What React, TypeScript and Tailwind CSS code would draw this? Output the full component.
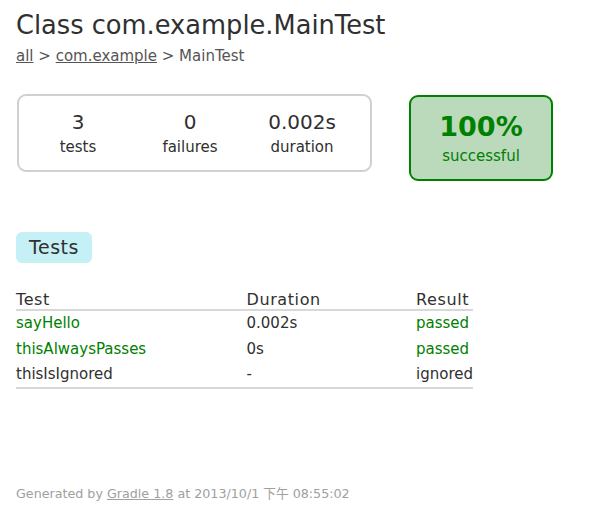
import React from 'react';

const tests = [
  { name: 'sayHello', duration: '0.002s', result: 'passed', ok: true },
  { name: 'thisAlwaysPasses', duration: '0s', result: 'passed', ok: true },
  { name: 'thisIsIgnored', duration: '-', result: 'ignored', ok: false },
];

const counters = [
  { value: '3', label: 'tests' },
  { value: '0', label: 'failures' },
  { value: '0.002s', label: 'duration' },
];

export default function App() {
  return (
    <div
      className="min-h-[514px] bg-white px-4 pt-[10px] text-[#303030]"
      style={{ fontFamily: '"DejaVu Sans", "Noto Sans CJK SC", sans-serif' }}
    >
      <h1 className="text-[25.7px] leading-[30px]">Class com.example.MainTest</h1>
      <div className="mt-[7px] text-[15px] leading-[18px] text-[#555]">
        <a className="underline">all</a> &gt; <a className="underline">com.example</a> &gt; MainTest
      </div>

      <div className="mt-[29px] flex items-start">
        <div className="ml-px flex h-[78px] w-[355px] items-center rounded-[9px] border-2 border-[#d0d0d0] pl-[3px]">
          {counters.map((c) => (
            <div key={c.label} className="w-[112px] text-center">
              <div className="text-[20px] leading-[24px]">{c.value}</div>
              <div className="mt-[4px] text-[15px] leading-[18px]">{c.label}</div>
            </div>
          ))}
        </div>
        <div className="ml-[37px] mt-px flex h-[86px] w-[144px] flex-col items-center justify-center rounded-[9px] border-2 border-[#008000] bg-[#bbd9bb] text-[#008000]">
          <div className="text-[27px] leading-[32px] font-bold">100%</div>
          <div className="mt-[4px] text-[15px] leading-[18px]">successful</div>
        </div>
      </div>

      <div className="mt-[51px] flex h-[31px] w-[76px] items-center justify-center rounded-[6px] bg-[#c5f0f5] text-[19px] tracking-[0.5px]">
        Tests
      </div>

      <table className="mt-[28px] w-[457px] border-collapse text-[15px]">
        <thead>
          <tr className="border-b-2 border-[#d8d8d8] text-left">
            <th className="w-[231px] p-0 text-[16px] leading-[18px] font-normal tracking-[0.6px]">Test</th>
            <th className="w-[170px] p-0 text-[16px] leading-[18px] font-normal tracking-[0.6px]">Duration</th>
            <th className="p-0 text-[16px] leading-[18px] font-normal tracking-[0.6px]">Result</th>
          </tr>
        </thead>
        <tbody className="border-b-2 border-[#d8d8d8]">
          {tests.map((t) => (
            <tr key={t.name} className="h-[26px]">
              <td className={`p-0 ${t.ok ? 'text-[#008000]' : ''}`}>{t.name}</td>
              <td className="p-0">{t.duration}</td>
              <td className={`p-0 ${t.ok ? 'text-[#008000]' : ''}`}>{t.result}</td>
            </tr>
          ))}
        </tbody>
      </table>

      <div className="mt-[97px] text-[12.7px] leading-[16px] text-[#a0a0a0]">
        Generated by <a className="underline">Gradle 1.8</a> at 2013/10/1 下午 08:55:02
      </div>
    </div>
  );
}
